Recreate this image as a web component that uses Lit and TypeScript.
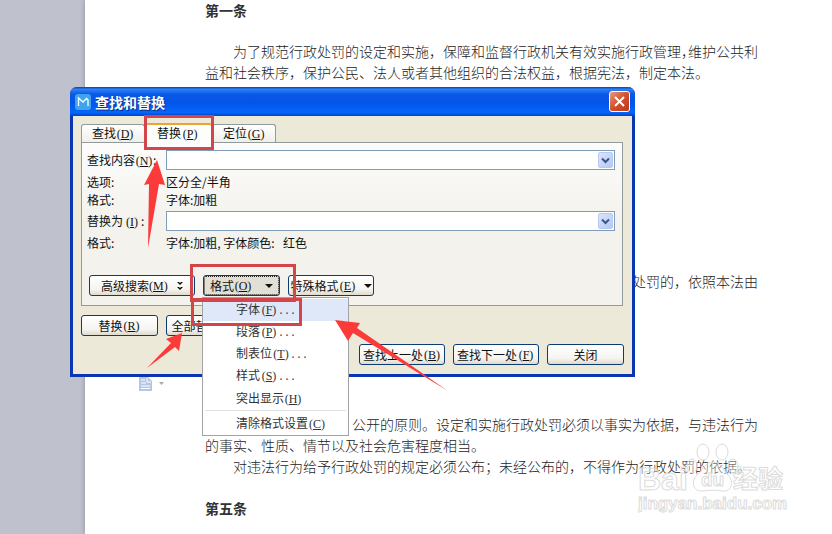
import { LitElement, html, css, svg } from "lit";
import { customElement, property } from "lit/decorators.js";

/** Mnemonic shown after a caption, such as (N). */
const key = (k: string) => html`<span class="key">(<u>${k}</u>)</span>`;

const keyStyles = css`
  .key {
    display: inline-block;
    width: 18px;
    text-align: center;
    white-space: nowrap;
    font-family: "Liberation Serif", serif;
  }
  .dots {
    font-family: "Liberation Mono", monospace;
    font-size: 10px;
  }
`;

@customElement("combo-field")
class ComboField extends LitElement {
  @property() label = "";
  @property() mnemonic = "";

  static styles = [
    keyStyles,
    css`
      :host { display: contents; }
      label { white-space: nowrap; align-self: center; }
      .box {
        display: flex;
        box-sizing: border-box;
        height: 20px;
        border: 1px solid #7f9db9;
        background: #fff;
        padding: 1px;
      }
      input {
        flex: 1;
        min-width: 0;
        border: 0;
        padding: 0 3px;
        outline: 0;
        font: inherit;
        background: transparent;
      }
      button {
        width: 15px;
        padding: 0;
        border: 1px solid #b9c9f0;
        border-radius: 2px;
        background: linear-gradient(135deg, #dbe5fd, #b4c8f5);
        display: grid;
        place-items: center;
      }
    `,
  ];

  render() {
    return html`
      <label for="text">${this.label}${key(this.mnemonic)}:</label>
      <div class="box">
        <input id="text" type="text" />
        <button type="button" aria-label="▾">
          <svg width="9" height="7" viewBox="0 0 9 7">
            <path d="M1 1.5 4.5 5 8 1.5" fill="none" stroke="#3d5585" stroke-width="2" />
          </svg>
        </button>
      </div>
    `;
  }
}

@customElement("find-dialog")
class FindDialog extends LitElement {
  static styles = [
    keyStyles,
    css`
      :host {
        display: block;
        box-sizing: border-box;
        font: 12px/16px "Noto Sans CJK SC", sans-serif;
        color: #111;
        background: #ece9d8;
        border: 3px solid #0a36b4;
        border-top: 0;
        border-radius: 7px 7px 0 0;
      }
      .title {
        display: flex;
        align-items: center;
        gap: 4px;
        height: 29px;
        margin: 0 -3px;
        padding: 0 5px;
        border-radius: 7px 7px 0 0;
        box-sizing: border-box;
        background: linear-gradient(#0a3fb8 0, #2f80f5 8%, #0a58e6 25%, #0355e8 55%, #0566fb 88%, #0343c0 100%);
      }
      h2 {
        flex: 1;
        margin: 0;
        font-size: 14px;
        line-height: 20px;
        color: #fff;
        text-shadow: 1px 1px 0 #0a2f8a;
      }
      .close {
        width: 21px;
        height: 21px;
        padding: 0;
        border: 1px solid #fff;
        border-radius: 3px;
        background: linear-gradient(135deg, #e79a80, #d2502c 50%, #b83a1a);
        display: grid;
        place-items: center;
      }
      .body { padding: 6px 8px 9px; }
      .tabs { display: flex; align-items: flex-end; height: 20px; }
      .tab {
        font: inherit;
        color: inherit;
        height: 18px;
        box-sizing: border-box;
        padding: 0 10px;
        border: 1px solid #919b9c;
        border-bottom: 0;
        border-radius: 3px 3px 0 0;
        background: linear-gradient(#fff, #f0efe8);
        white-space: nowrap;
      }
      .tab.on {
        height: 20px;
        margin-bottom: -1px;
        padding: 0 12px 2px 11px;
        z-index: 1;
        border-top: 2px solid #e8a535;
        background: #fdfdfb;
      }
      .panel {
        margin-right: 1px;
        border: 1px solid #919b9c;
        background: linear-gradient(#fcfcfc, #f3f2ec 50%);
        padding: 7px 7px 9px 5px;
      }
      .fields {
        display: grid;
        grid-template-columns: 79px 1fr;
        grid-template-rows: 20px 24px 12px;
        align-items: center;
      }
      .fields + .fields { grid-template-rows: 20px 24px; margin-top: 5px; }
      .tools { display: flex; gap: 8px; margin: 20px 0 0 2px; }
      .btn {
        font: inherit;
        color: inherit;
        height: 21px;
        box-sizing: border-box;
        padding: 0;
        border: 1px solid #0d3c74;
        border-radius: 3px;
        background: linear-gradient(#fff, #f5f4ef 70%, #dedacd);
        white-space: nowrap;
        display: flex;
        align-items: center;
        justify-content: center;
        overflow: hidden;
      }
      .w106 { width: 106px; }
      .w86 { width: 86px; }
      .w77 { width: 77px; }
      .chev { margin-left: 10px; }
      .caret {
        margin-left: 7px;
        border: 4px solid transparent;
        border-top-color: #111;
        border-bottom: 0;
      }
      .pressed {
        background: #e2dfd5;
        outline: 1px dotted #222;
        outline-offset: -2px;
      }
      .pressed .caret { margin-left: 13px; }
      .anchor { position: relative; }
      .menu {
        position: absolute;
        z-index: 3;
        top: 22px;
        left: -1px;
        width: 147px;
        box-sizing: border-box;
        margin: 0;
        padding: 1px 0;
        list-style: none;
        background: #fff;
        border: 1px solid #a0a2a8;
      }
      .menu button {
        display: block;
        width: 100%;
        height: 22px;
        padding: 0 0 0 33px;
        border: 0;
        background: none;
        font: inherit;
        text-align: left;
        color: #333;
        white-space: nowrap;
      }
      .menu .hot { background: #dfe8f8; }
      .menu .sep { border-top: 1px solid #e2e2e4; margin: 1px 2px 0; padding-top: 1px; }
      .menu .sep button { padding-left: 31px; }
      .row { display: flex; gap: 8px; margin-top: 9px; }
      .row.end { justify-content: flex-end; margin-top: 8px; }
    `,
  ];

  private item(text: string, k: string, dots = true, cls = "") {
    return html`<button type="button" role="menuitem" class=${cls}>${text}${key(k)}${dots ? html`<span class="dots">...</span>` : ""}</button>`;
  }

  render() {
    return html`
      <header class="title">
        <svg width="16" height="16" viewBox="0 0 16 16">
          <rect width="16" height="16" rx="3" fill="#3fa4ee" />
          <path d="M3.500 12V4L8 8l3.500-3.500L13 6v6" fill="none" stroke="#fff" stroke-width="1.3" />
        </svg>
        <h2>查找和替换</h2>
        <button class="close" type="button" aria-label="×">
          <svg width="13" height="13" viewBox="0 0 13 13">
            <path d="M2 2l9 9M11 2l-9 9" stroke="#fff" stroke-width="2" />
          </svg>
        </button>
      </header>
      <div class="body">
        <div class="tabs" role="tablist">
          <button class="tab" role="tab" type="button">查找${key("D")}</button>
          <button class="tab on" role="tab" type="button" aria-selected="true">替换${key("P")}</button>
          <button class="tab" role="tab" type="button">定位${key("G")}</button>
        </div>
        <div class="panel">
          <div class="fields">
            <combo-field label="查找内容" mnemonic="N"></combo-field>
            <span>选项:</span><span>区分全/半角</span>
            <span>格式:</span><span>字体:加粗</span>
          </div>
          <div class="fields">
            <combo-field label="替换为" mnemonic="I"></combo-field>
            <span>格式:</span><span>字体:加粗, 字体颜色:&ensp;&thinsp;红色</span>
          </div>
          <div class="tools">
            <button class="btn w106" type="button">
              高级搜索${key("M")}
              <svg class="chev" width="6" height="8" viewBox="0 0 6 8">
                <path d="M0 0h2l1 1 1-1h2L3 3zM0 5h2l1 1 1-1h2L3 8z" fill="#111" />
              </svg>
            </button>
            <div class="anchor">
              <button class="btn w77 pressed" type="button" aria-haspopup="menu">格式${key("O")}<span class="caret"></span></button>
              <ul class="menu" role="menu">
                <li>${this.item("字体", "F", true, "hot")}</li>
                <li>${this.item("段落", "P")}</li>
                <li>${this.item("制表位", "T")}</li>
                <li>${this.item("样式", "S")}</li>
                <li>${this.item("突出显示", "H", false)}</li>
                <li class="sep">${this.item("清除格式设置", "C", false)}</li>
              </ul>
            </div>
            <button class="btn w86" type="button">特殊格式${key("E")}<span class="caret"></span></button>
          </div>
        </div>
        <div class="row">
          <button class="btn w77" type="button">替换${key("R")}</button>
          <button class="btn w77" type="button">全部替换${key("A")}</button>
        </div>
        <div class="row end">
          <button class="btn w86" type="button">查找上一处${key("B")}</button>
          <button class="btn w86" type="button">查找下一处${key("F")}</button>
          <button class="btn w77" type="button">关闭</button>
        </div>
      </div>
    `;
  }
}

const arrows = [
  "157,160 165,185 159,184 148,248 149,184 144,185",
  "182,333 179,351 175,347 147,368 171,343 166,339",
  "335,320 360,323 357,328 448,391 353,333 348,341",
];

const frames = [
  [145.5, 116.5, 67, 32],
  [191.5, 265.5, 103, 35],
  [192.5, 299.5, 108, 25],
];

@customElement("app-root")
class AppRoot extends LitElement {
  static styles = css`
    :host {
      display: block;
      position: relative;
      min-height: 100vh;
      overflow: hidden;
      background: #bfc2cd;
      font: 14px/21px "Noto Sans CJK SC", sans-serif;
    }
    .page {
      min-height: 100vh;
      box-sizing: border-box;
      margin-left: 85px;
      padding: 0 74px 15px 120px;
      background: #fff;
      box-shadow: 0 0 5px #8b8e9c;
      color: #1c1c1c;
      font-weight: 300;
      white-space: nowrap;
    }
    h3 { margin: 0; font-size: 14px; font-weight: 700; color: #333; }
    p { margin: 0; }
    .first { margin: 20px 0 188px; }
    .second { margin-bottom: 122px; text-align: right; }
    .tail { text-align: right; }
    .indent { text-indent: 2em; }
    .trim { font-feature-settings: "halt"; }
    .last { margin-top: 21px; }
    find-dialog { position: absolute; z-index: 0; left: 70px; right: 197px; top: 87px; }
    .paste { position: absolute; left: 139px; top: 377px; }
    .marks { position: absolute; z-index: 1; left: 0; top: 0; pointer-events: none; }
    .logo { position: absolute; right: 42px; bottom: 12px; pointer-events: none; }
    .logo text { font-family: "Liberation Sans", "Noto Sans CJK SC", sans-serif; font-weight: 700; }
  `;

  render() {
    return html`
      <article class="page">
        <h3>第一条</h3>
        <p class="first">
          &emsp;&emsp;为了规范行政处罚的设定和实施，保障和监督行政机关有效实施行政管理<span class="trim">，</span>维护公共利<br />
          益和社会秩序，保护公民、法人或者其他组织的合法权益，根据宪法，制定本法。
        </p>
        <p class="second">处罚的，依照本法由</p>
        <p class="tail">公开的原则。设定和实施行政处罚必须以事实为依据，与违法行为</p>
        <p>的事实、性质、情节以及社会危害程度相当。</p>
        <p class="indent">对违法行为给予行政处罚的规定必须公布；未经公布的，不得作为行政处罚的依据。</p>
        <h3 class="last">第五条</h3>
      </article>
      <svg class="paste" width="28" height="14" viewBox="0 0 28 14">
        <path d="M0 0h9l4 4v10H0z" fill="#b3c6e2" />
        <path d="M2 3h4M2 6h5M2 9h9M2 11.500h9M8 1v4h4" fill="none" stroke="#fff" />
        <path d="M20 5h5l-2.500 3z" fill="#aaa" />
      </svg>
      <find-dialog></find-dialog>
      <svg class="marks" width="832" height="534" viewBox="0 0 832 534">
        ${frames.map(([x, y, w, h]) => svg`<rect x=${x} y=${y} width=${w} height=${h} fill="none" stroke="#d3444b" stroke-width="3" />`)}
        ${arrows.map((p) => svg`<polygon points=${p} fill="#fb3a3a" />`)}
      </svg>
      <svg class="logo" width="152" height="82" viewBox="0 0 152 82">
        <g fill="#fff" fill-opacity="0.35" stroke="#dcdcdc" stroke-width="1">
          <ellipse cx="65" cy="12" rx="6" ry="8" />
          <ellipse cx="84" cy="12" rx="6" ry="8" />
          <ellipse cx="54" cy="26" rx="5" ry="7" />
          <ellipse cx="95" cy="26" rx="5" ry="7" />
          <path d="M75 22c8 0 10 8 15 13 7 7 3 17-5 16-7-1-14-1-21 0-8 1-12-9-5-16 6-5 8-13 16-13z" />
          <text x="0" y="50" font-size="32">Bai</text>
          <text x="63" y="46" font-size="19">du</text>
          <text x="95" y="48" font-size="25">经验</text>
        </g>
        <text x="0" y="69" font-size="17" fill="#fff" stroke="#dcdcdc" stroke-width="1">jingyan.baidu.com</text>
      </svg>
    `;
  }
}
